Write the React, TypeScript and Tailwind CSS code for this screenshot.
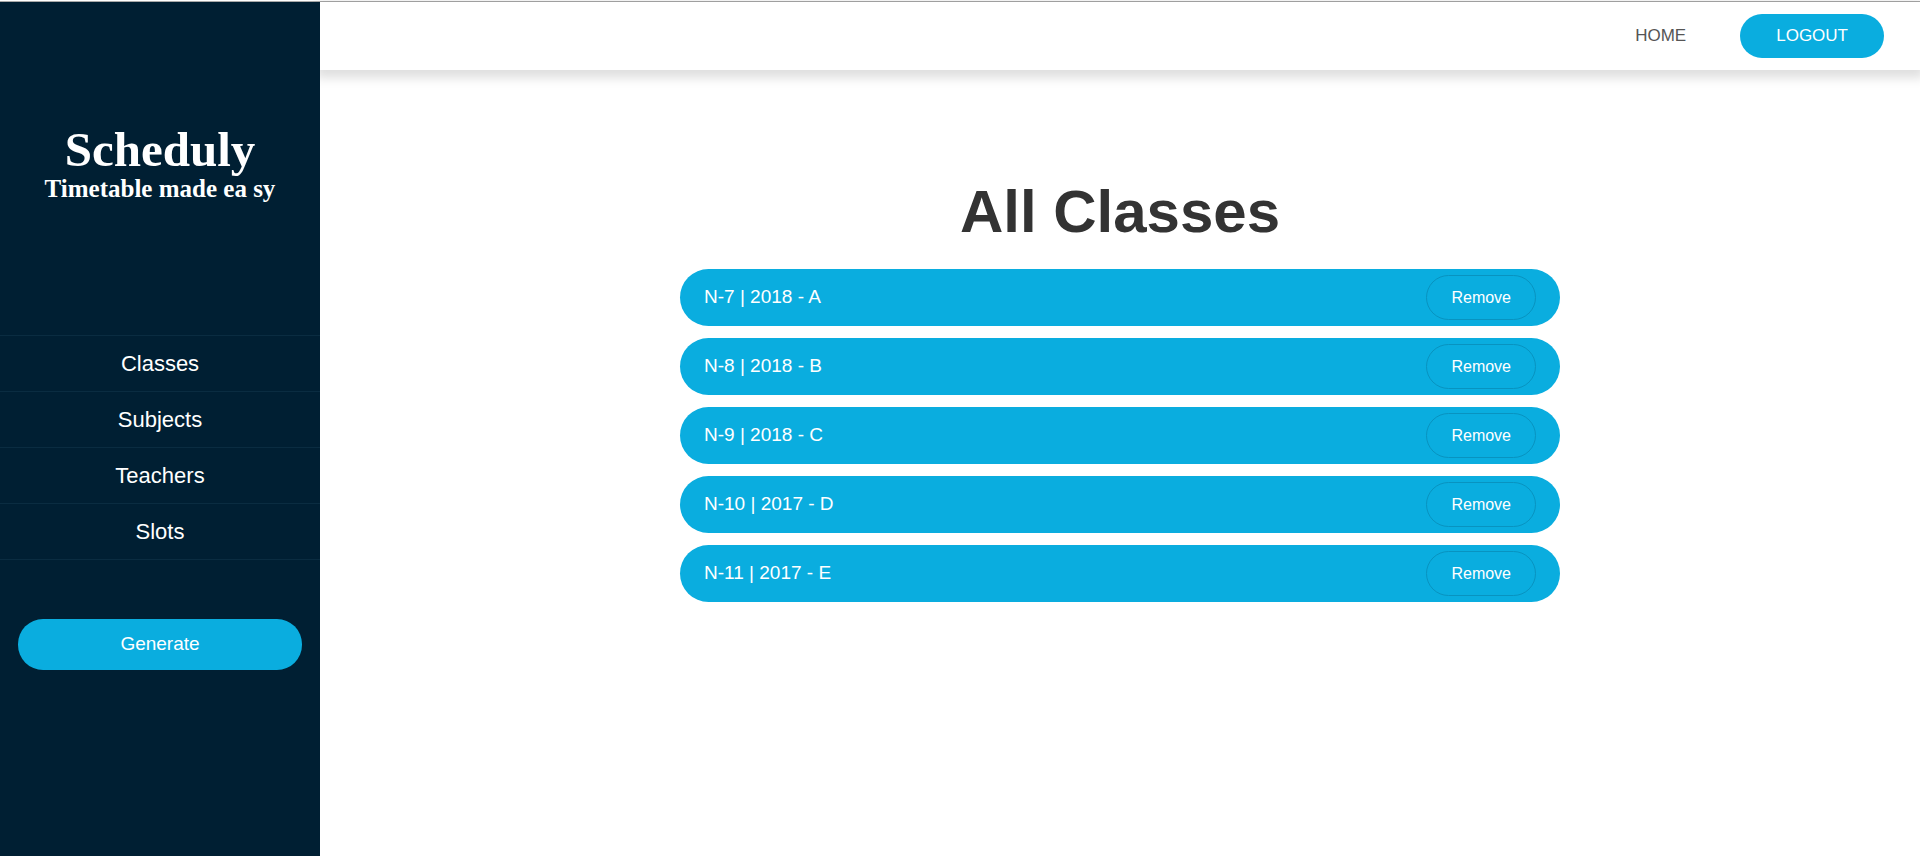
const navItems = ["Classes", "Subjects", "Teachers", "Slots"];

const classes = [
  "N-7 | 2018 - A",
  "N-8 | 2018 - B",
  "N-9 | 2018 - C",
  "N-10 | 2017 - D",
  "N-11 | 2017 - E",
];

function Sidebar() {
  return (
    <aside className="z-10 flex w-80 shrink-0 flex-col bg-[#001f33] pt-[121px] text-white">
      <div className="text-center font-['Liberation_Serif',serif] font-bold">
        <p className="text-[49px] leading-[54px]">Scheduly</p>
        <p className="text-[25px] leading-[24px]">Timetable made ea sy</p>
      </div>
      <nav className="mt-[134px] border-t border-[#0a2c41]">
        {navItems.map((item) => (
          <a
            key={item}
            href="#"
            className="block border-b border-[#0a2c41] text-center text-[22px] leading-[55px]"
          >
            {item}
          </a>
        ))}
      </nav>
      <button
        type="button"
        className="mx-[18px] mt-[59px] h-[51px] rounded-[25px] bg-[#0aaddf] text-[19px]"
      >
        Generate
      </button>
    </aside>
  );
}

function Header() {
  return (
    <header className="flex h-[68px] items-center justify-end gap-[54px] bg-white pr-9 text-[17px] shadow-[0_4px_10px_4px_rgba(0,0,0,0.13)]">
      <a href="#" className="text-[#555555]">
        HOME
      </a>
      <button type="button" className="h-11 rounded-full bg-[#0aaddf] px-9 text-white">
        LOGOUT
      </button>
    </header>
  );
}

function ClassRow({ name }: { name: string }) {
  return (
    <li className="flex h-[57px] items-center justify-between rounded-full bg-[#0aaddf] px-6 text-white">
      <span className="text-[19px]">{name}</span>
      <button
        type="button"
        className="h-[45px] rounded-full border border-[#0893c0] px-6 text-[16px]"
      >
        Remove
      </button>
    </li>
  );
}

export default function App() {
  return (
    <div className="flex min-h-screen flex-col overflow-x-hidden bg-white font-['Liberation_Sans',Arial,sans-serif]">
      <div className="h-0.5 border-b border-[#a9a9a9] bg-white" />
      <div className="flex grow">
        <Sidebar />
        <div className="flex grow flex-col">
          <Header />
          <main className="flex flex-col items-center pt-[108px]">
            <h1 className="text-[60px] leading-[68px] font-bold text-[#333333]">All Classes</h1>
            <ul className="mt-[23px] flex w-[55%] flex-col gap-3">
              {classes.map((name) => (
                <ClassRow key={name} name={name} />
              ))}
            </ul>
          </main>
        </div>
      </div>
    </div>
  );
}
